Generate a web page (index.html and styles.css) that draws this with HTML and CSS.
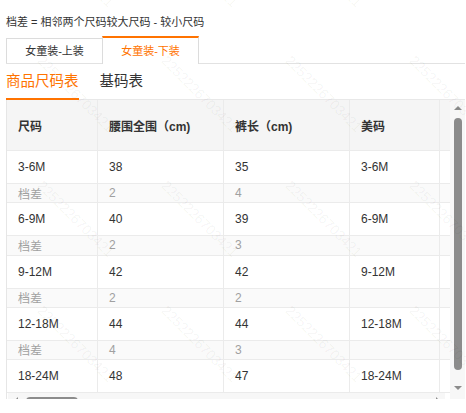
FILE: index.html
```html
<!DOCTYPE html>
<html lang="zh-CN">
<head>
<meta charset="utf-8">
<title>尺码表</title>
<link rel="stylesheet" href="styles.css">
</head>
<body>
<div class="page">
  <p class="note">档差 = 相邻两个尺码较大尺码 - 较小尺码</p>
  <div class="tabs">
    <div class="tab">女童装-上装</div>
    <div class="tab active">女童装-下装</div>
  </div>
  <div class="subtabs">
    <div class="subtab active">商品尺码表</div>
    <div class="subtab">基码表</div>
  </div>
  <div class="frame">
    <div class="viewport">
      <div class="grid">
        <div class="row head">
          <div class="c c1">尺码</div><div class="c c2">腰围全围（cm)</div><div class="c c3">裤长（cm)</div><div class="c c4">美码</div><div class="c c5"></div><div class="c c6"></div>
        </div>
        <div class="row data">
          <div class="c c1">3-6M</div><div class="c c2">38</div><div class="c c3">35</div><div class="c c4">3-6M</div><div class="c c5"></div><div class="c c6"></div>
        </div>
        <div class="row diff">
          <div class="c c1">档差</div><div class="c c2">2</div><div class="c c3">4</div><div class="c c4"></div><div class="c c5"></div><div class="c c6"></div>
        </div>
        <div class="row data">
          <div class="c c1">6-9M</div><div class="c c2">40</div><div class="c c3">39</div><div class="c c4">6-9M</div><div class="c c5"></div><div class="c c6"></div>
        </div>
        <div class="row diff">
          <div class="c c1">档差</div><div class="c c2">2</div><div class="c c3">3</div><div class="c c4"></div><div class="c c5"></div><div class="c c6"></div>
        </div>
        <div class="row data">
          <div class="c c1">9-12M</div><div class="c c2">42</div><div class="c c3">42</div><div class="c c4">9-12M</div><div class="c c5"></div><div class="c c6"></div>
        </div>
        <div class="row diff">
          <div class="c c1">档差</div><div class="c c2">2</div><div class="c c3">2</div><div class="c c4"></div><div class="c c5"></div><div class="c c6"></div>
        </div>
        <div class="row data">
          <div class="c c1">12-18M</div><div class="c c2">44</div><div class="c c3">44</div><div class="c c4">12-18M</div><div class="c c5"></div><div class="c c6"></div>
        </div>
        <div class="row diff">
          <div class="c c1">档差</div><div class="c c2">4</div><div class="c c3">3</div><div class="c c4"></div><div class="c c5"></div><div class="c c6"></div>
        </div>
        <div class="row data">
          <div class="c c1">18-24M</div><div class="c c2">48</div><div class="c c3">47</div><div class="c c4">18-24M</div><div class="c c5"></div><div class="c c6"></div>
        </div>
      </div>
      <div class="hbar">
        <div class="btn"><span class="tri-left"></span></div>
        <div class="hthumb"></div>
        <div class="hspace"></div>
        <div class="btn"><span class="tri-right"></span></div>
      </div>
    </div>
    <div class="vbar">
      <div class="btn"><span class="tri-up"></span></div>
      <div class="vtrack"><div class="vthumb"></div></div>
      <div class="btn"><span class="tri-down"></span></div>
      <div class="vend"></div>
    </div>
  </div>
  <div class="watermark">
    <div class="wm-grid">
      <span class="wm">2252226703421</span><span class="wm">2252226703421</span><span class="wm">2252226703421</span><span class="wm">2252226703421</span>
      <span class="wm">2252226703421</span><span class="wm">2252226703421</span><span class="wm">2252226703421</span><span class="wm">2252226703421</span>
      <span class="wm">2252226703421</span><span class="wm">2252226703421</span><span class="wm">2252226703421</span><span class="wm">2252226703421</span>
      <span class="wm">2252226703421</span><span class="wm">2252226703421</span><span class="wm">2252226703421</span><span class="wm">2252226703421</span>
    </div>
  </div>
</div>
</body>
</html>
```
FILE: styles.css
```css
html, body {
  margin: 0;
  background: #fff;
}
body {
  font-family: "Liberation Sans", "Noto Sans CJK SC", sans-serif;
  color: #333;
}
.page {
  position: relative;
  width: 466px;
  height: 413px;
  box-sizing: border-box;
  padding: 0 1px 0 6px;
  overflow: hidden;
}
.note {
  margin: 0;
  padding-top: 14px;
  font-size: 11px;
  line-height: 16px;
  color: #333;
}
.tabs {
  display: flex;
  align-items: flex-end;
  margin-top: 6px;
  height: 28px;
  box-sizing: border-box;
  border-bottom: 1px solid #e2e2e2;
}
.tab {
  width: 97px;
  height: 25px;
  box-sizing: border-box;
  border: 1px solid #dcdcdc;
  border-bottom: 0;
  background: #fff;
  font-size: 11px;
  line-height: 24px;
  text-align: center;
  color: #333;
}
.tab.active {
  height: 28px;
  margin-left: -1px;
  margin-bottom: -1px;
  border-top: 2px solid #ff7300;
  line-height: 26px;
  color: #ff7300;
}
.subtabs {
  display: flex;
  height: 36px;
  box-sizing: border-box;
  border-bottom: 1px solid #e8e8e8;
}
.subtab {
  height: 36px;
  box-sizing: border-box;
  margin-right: 21px;
  margin-bottom: -1px;
  border-bottom: 2px solid transparent;
  font-size: 14.5px;
  line-height: 34px;
  color: #333;
}
.subtab.active {
  color: #ff7300;
  border-bottom-color: #ff7300;
}
.frame {
  display: flex;
  height: 299px;
}
.viewport {
  flex: 1;
  min-width: 0;
  overflow: hidden;
  border-left: 1px solid #e6e6e6;
}
.grid {
  width: max-content;
}
.row {
  display: flex;
  box-sizing: border-box;
  border-bottom: 1px solid #ebebeb;
}
.head {
  height: 51px;
  background: #f5f5f5;
  font-weight: bold;
}
.data {
  height: 33px;
  background: #fff;
}
.diff {
  height: 19.25px;
  background: #fafafa;
  color: #a0a0a0;
}
.c {
  flex: none;
  box-sizing: border-box;
  display: flex;
  align-items: center;
  padding-left: 11px;
  border-right: 1px solid #ebebeb;
  font-size: 12px;
  white-space: nowrap;
}
.c1 { width: 91px; }
.c2 { width: 126px; }
.c3 { width: 126px; }
.c4 { width: 90px; }
.c5 { width: 126px; }
.c6 { width: 90px; }
.hbar {
  display: flex;
  align-items: center;
  width: 437px;
  height: 15px;
  margin-left: 1px;
  background: #f7f7f7;
}
.btn {
  flex: none;
  width: 15px;
  height: 15px;
  display: flex;
  align-items: center;
  justify-content: center;
}
.hthumb {
  flex: none;
  width: 52px;
  height: 8px;
  margin-left: 3px;
  border-radius: 4px;
  background: #8c8c8c;
}
.hspace {
  flex: 1;
}
.vbar {
  flex: none;
  width: 15px;
  display: flex;
  flex-direction: column;
  background: #f7f7f7;
}
.vtrack {
  flex: 1;
  display: flex;
  justify-content: center;
}
.vthumb {
  width: 8px;
  height: 252px;
  margin-top: 3px;
  border-radius: 4px;
  background: #8c8c8c;
}
.vend {
  height: 4px;
}
.tri-up, .tri-down, .tri-left, .tri-right {
  width: 0;
  height: 0;
  border: 4px solid transparent;
}
.tri-up { border-bottom-color: #8c8c8c; border-top-width: 0; }
.tri-down { border-top-color: #8c8c8c; border-bottom-width: 0; }
.tri-left { border-right-color: #8c8c8c; border-left-width: 0; }
.tri-right { border-left-color: #8c8c8c; border-right-width: 0; }
.watermark {
  position: absolute;
  top: 0;
  left: 0;
  width: 466px;
  height: 413px;
  overflow: hidden;
  pointer-events: none;
}
.wm-grid {
  display: grid;
  grid-template-columns: repeat(4, 124px);
  grid-auto-rows: 125px;
  margin: -72px 0 0 45px;
}
.wm {
  display: block;
  width: max-content;
  font-family: "Liberation Sans", sans-serif;
  font-size: 14px;
  line-height: 14px;
  color: rgba(0, 0, 0, 0.05);
  white-space: nowrap;
  transform: rotate(45deg);
  transform-origin: 0 0;
}
```
